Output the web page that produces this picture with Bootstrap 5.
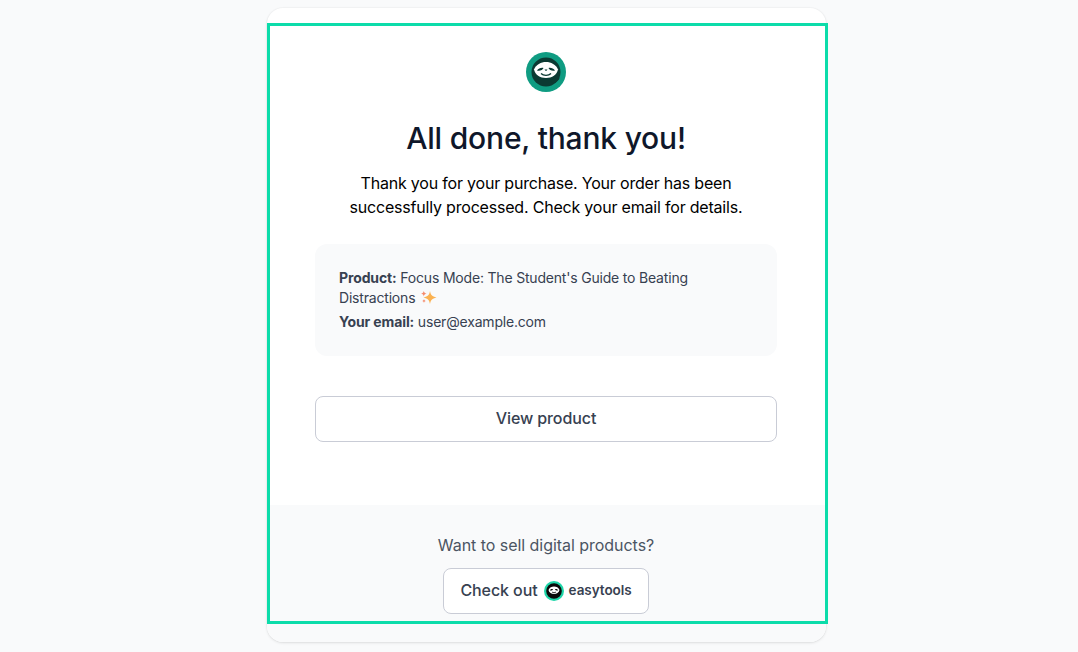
<!DOCTYPE html>
<html lang="en">
<head>
<meta charset="utf-8">
<title>All done</title>
<link href="https://cdn.jsdelivr.net/npm/bootstrap@5.3.0/dist/css/bootstrap.min.css" rel="stylesheet">
<style>
html,body{height:652px;overflow:hidden}
body{background:#f9fafb;font-family:Inter,"Liberation Sans",sans-serif;padding-top:8px}
.sheet{width:559px;height:634px;margin-left:267px;border-radius:16px;background:#fff;box-shadow:0 1px 3px rgba(0,0,0,.1),0 0 0 1px rgba(0,0,0,.02);overflow:hidden}
.sheet-main{padding:44px 48px 0;width:558px;height:497px}
.logo-big{width:40px;height:40px;display:block}
.ttl{font-size:30px;line-height:36px;font-weight:500;color:#0f172a;margin:27px 0 0;padding-top:1px;letter-spacing:-.2px}
.intro{font-size:16px;line-height:24px;color:#000;margin:15px auto 0;width:420px;letter-spacing:-.2px}
.info{background:#f9fafb;border-radius:12px;margin-top:25px;padding:24px;height:112px;font-size:14px;line-height:20px;color:#374151;letter-spacing:-.19px}
.info p{margin:0 0 4px}
.info b{font-weight:700;letter-spacing:-.13px}
.view{display:block;margin-top:40px;height:46px;line-height:43px;border:1px solid #c9ccd6;border-radius:8px;background:#fff;font-size:16px;font-weight:500;color:#374151;text-align:center;letter-spacing:-.1px;text-decoration:none}
.foot{background:#f9fafb;height:137px;padding:28px 1px 0 0;text-align:center}
.foot-q{font-size:16px;line-height:24px;color:#4b5563;letter-spacing:-.04px}
.check{display:inline-flex;align-items:center;margin-top:11px;height:46px;width:206px;justify-content:center;border:1px solid #c9ccd6;border-radius:8px;background:#fff;font-size:16px;font-weight:500;line-height:22px;color:#374151;letter-spacing:-.08px;text-decoration:none}
.check-lbl{padding-bottom:2px}
.brand{font-size:13.5px;font-weight:600;letter-spacing:-.05px;margin-left:5px;padding-bottom:2px}
.check svg{margin-left:6px}
.spark{vertical-align:-2px;margin-left:1px}
.outline{position:absolute;left:267px;top:23px;width:561px;height:601px;border:3px solid #0cdcaa;pointer-events:none}
</style>
</head>
<body>
<main class="sheet">
  <div class="sheet-main">
    <div class="d-flex justify-content-center">
      <svg class="logo-big" viewBox="0 0 40 40" role="img" aria-label="logo">
        <circle cx="20" cy="20" r="20" fill="#0f9c82"/>
        <circle cx="20" cy="20" r="14.500" fill="#0b3a33"/>
        <path d="M27 31.500c3-1 6-3 6.500-5.500l-3-3-6 6z" fill="#0b3a33"/>
        <path d="M8 17.500c2-5 7-7.500 12-7.500s10 2.500 12 7.500c-1 5-6 8.500-12 8.500S9 22.500 8 17.500z" fill="#fff"/>
        <path d="M11 18.500c1.500-2 4-3 6.500-2.500-.5 1.800-4 3.500-6.500 2.500zM29 18.500c-1.500-2-4-3-6.500-2.500.5 1.800 4 3.500 6.500 2.500z" fill="#0b3a33"/>
        <path d="M18.500 17.500h3l-1.500 1.800z" fill="#0b3a33"/>
        <path d="M15 21.500c2.500 2.500 7.500 2.500 10 0" stroke="#0b3a33" stroke-width="1.300" fill="none"/>
      </svg>
    </div>
    <h1 class="ttl text-center">All done, thank you!</h1>
    <p class="intro text-center">Thank you for your purchase. Your order has been successfully processed. Check your email for details.</p>
    <div class="info">
      <p><b>Product:</b> Focus Mode: The Student's Guide to Beating Distractions <svg class="spark" width="17" height="15" viewBox="0 0 17 15"><path d="M10 1c.6 3.800 2 5.400 6.500 6.500C12 8.600 10.600 10.200 10 14c-.6-3.800-2-5.400-6.500-6.500C8 6.400 9.400 4.800 10 1z" fill="#fbb251"/><path d="M3.800 1c.4 1.700 1 2.300 2.700 2.700-1.700.4-2.300 1-2.700 2.700-.4-1.700-1-2.300-2.700-2.700C2.800 3.300 3.400 2.700 3.800 1zM4 9c.3 1.200.7 1.600 1.900 1.900-1.200.3-1.600.7-1.900 1.900-.3-1.200-.7-1.600-1.900-1.900 1.200-.3 1.600-.7 1.900-1.900z" fill="#f58a6b"/></svg></p>
      <p><b>Your email:</b> user@example.com</p>
    </div>
    <a class="view" href="#">View product</a>
  </div>
  <div class="foot">
    <div class="foot-q">Want to sell digital products?</div>
    <a class="check" href="#"><span class="check-lbl">Check out</span>
      <svg width="20" height="20" viewBox="0 0 20 20" role="img" aria-label="easytools logo">
        <circle cx="10" cy="10" r="10" fill="#1fd6a9"/>
        <circle cx="10" cy="10" r="7.800" fill="#0a0a0a"/>
        <path d="M4.500 9c1-2.500 3-3.500 5.500-3.500S14.500 6.500 15.500 9c-.5 2.500-3 4-5.500 4s-5-1.500-5.500-4z" fill="#fff"/>
        <path d="M5.800 9.300c.7-1 2-1.400 3.200-1.100-.3 1-2 1.600-3.200 1.100zM14.200 9.300c-.7-1-2-1.400-3.200-1.100.3 1 2 1.600 3.200 1.100z" fill="#0a0a0a"/>
        <path d="M8 11c1 .9 3 .9 4 0" stroke="#0a0a0a" stroke-width=".8" fill="none"/>
      </svg>
      <span class="brand">easytools</span>
    </a>
  </div>
</main>
<div class="outline"></div>
<script src="https://cdn.jsdelivr.net/npm/bootstrap@5.3.0/dist/js/bootstrap.bundle.min.js"></script>
</body>
</html>
